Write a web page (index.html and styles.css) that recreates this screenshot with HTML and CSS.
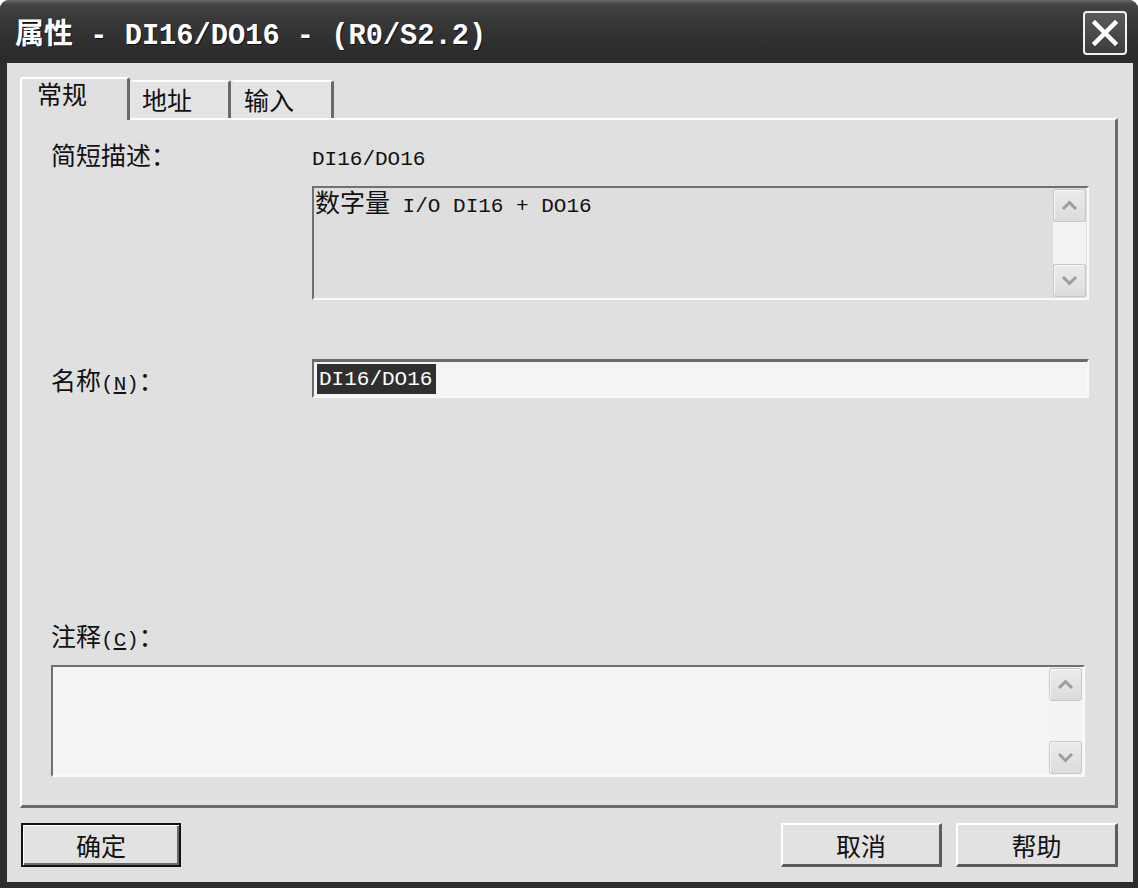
FILE: index.html
```html
<!DOCTYPE html>
<html lang="zh-CN">
<head>
<meta charset="utf-8">
<title>属性 - DI16/DO16 - (R0/S2.2)</title>
<link rel="stylesheet" href="styles.css">
</head>
<body>
<div class="window">
  <div class="titlebar">
    <div class="title">属性<span class="title-lat"> - DI16/DO16 - (R0/S2.2)</span></div>
    <div class="close" aria-label="关闭">
      <svg width="30" height="30" viewBox="0 0 30 30"><path d="M5 5 L25 25 M25 5 L5 25" stroke="#fff" stroke-width="4.5" stroke-linecap="square" fill="none"/></svg>
    </div>
  </div>
  <div class="client">
    <div class="tabs">
      <div class="tab tab-active tab-1">常规</div>
      <div class="tab tab-2">地址</div>
      <div class="tab tab-3">输入</div>
    </div>
    <div class="panel">
      <div class="row row-desc">
        <div class="label">简短描述：</div>
        <div class="value"><span class="lat">DI16/DO16</span></div>
      </div>
      <div class="row row-box">
        <div class="label"></div>
        <div class="box box-readonly">
          <div class="box-text">数字量<span class="lat"> I/O DI16 + DO16</span></div>
          <div class="vscroll">
            <div class="sbtn"><svg width="17" height="11" viewBox="0 0 17 11"><path d="M2 9 L8.5 2.5 L15 9" stroke="#9c9c9c" stroke-width="3" fill="none"/></svg></div>
            <div class="strack"></div>
            <div class="sbtn"><svg width="17" height="11" viewBox="0 0 17 11"><path d="M2 2 L8.5 8.5 L15 2" stroke="#9c9c9c" stroke-width="3" fill="none"/></svg></div>
          </div>
        </div>
      </div>
      <div class="row row-name">
        <div class="label">名称<span class="lat">(<u>N</u>)</span>：</div>
        <div class="field"><span class="sel lat">DI16/DO16</span></div>
      </div>
      <div class="spacer"></div>
      <div class="label label-comment">注释<span class="lat">(<u>C</u>)</span>：</div>
      <div class="box box-comment">
        <div class="box-text"></div>
        <div class="vscroll">
          <div class="sbtn"><svg width="17" height="11" viewBox="0 0 17 11"><path d="M2 9 L8.5 2.5 L15 9" stroke="#9c9c9c" stroke-width="3" fill="none"/></svg></div>
          <div class="strack"></div>
          <div class="sbtn"><svg width="17" height="11" viewBox="0 0 17 11"><path d="M2 2 L8.5 8.5 L15 2" stroke="#9c9c9c" stroke-width="3" fill="none"/></svg></div>
        </div>
      </div>
    </div>
    <div class="buttons">
      <div class="btn btn-default">确定</div>
      <div class="grow"></div>
      <div class="btn">取消</div>
      <div class="btn btn-help">帮助</div>
    </div>
  </div>
</div>
</body>
</html>
```

FILE: styles.css
```css
html, body {
  margin: 0;
  padding: 0;
  background: #ffffff;
}

body {
  font-family: "Noto Sans CJK SC", "Liberation Sans", sans-serif;
  font-size: 25px;
  color: #111;
}

.window {
  width: 1138px;
  height: 888px;
  background: #2d2d2d;
  border-radius: 9px 9px 0 0;
  display: flex;
  flex-direction: column;
  overflow: hidden;
}

.titlebar {
  height: 63px;
  flex: none;
  display: flex;
  align-items: center;
  justify-content: space-between;
  padding: 0 11px 0 15px;
  background: linear-gradient(#6a6a6a 0, #454545 4px, #383838 30%, #2f2f2f 70%, #2a2a2a 100%);
}

.title {
  color: #fff;
  font-weight: bold;
  font-size: 29px;
  line-height: 32px;
  margin-top: 5px;
  white-space: pre;
  text-shadow: 1px 1px 0 #111;
}

.title-lat {
  font-family: "Liberation Mono", monospace;
  font-size: 28.7px;
}

.close {
  width: 44px;
  height: 44px;
  box-sizing: border-box;
  margin-top: 3px;
  border: 2px solid #f2f2f2;
  border-radius: 4px;
  background: linear-gradient(#5a5a5a, #3c3c3c);
  display: flex;
  align-items: center;
  justify-content: center;
}

.client {
  flex: 1;
  background: #e0e0e0;
  margin: 0 5px 6px 7px;
  padding: 14px 15px 15px 13px;
  display: flex;
  flex-direction: column;
  min-height: 0;
}

.lat {
  font-family: "Liberation Mono", monospace;
  font-size: 21px;
  line-height: 14px;
}

/* tabs */
.tabs {
  display: flex;
  align-items: flex-end;
  height: 43px;
  margin-bottom: -2px;
  flex: none;
}

.tab {
  box-sizing: border-box;
  height: 40px;
  background: #e4e4e4;
  border-top: 2px solid #fff;
  border-left: 2px solid #fff;
  border-right: 3px solid #6a6a6a;
  border-radius: 3px 3px 0 0;
  line-height: 26px;
  padding-top: 4px;
  white-space: nowrap;
}

.tab-active {
  height: 43px;
  position: relative;
  z-index: 1;
  background: #e0e0e0;
  padding-top: 1px;
}

.tab-1 { width: 110px; padding-left: 15px; }
.tab-2 { width: 101px; padding-left: 10px; border-left-color: #e4e4e4; }
.tab-3 { width: 103px; padding-left: 11px; border-left-color: #e4e4e4; }

/* panel */
.panel {
  flex: 1;
  box-sizing: border-box;
  border-top: 2px solid #fff;
  border-left: 2px solid #fff;
  border-right: 3px solid #6b6b6b;
  border-bottom: 3px solid #6b6b6b;
  padding: 21px 26px 28px 29px;
  display: flex;
  flex-direction: column;
  min-height: 0;
}

.row {
  display: flex;
  flex: none;
}

.label {
  width: 261px;
  flex: none;
  line-height: 26px;
  white-space: nowrap;
}

.value {
  line-height: 26px;
}

.row-box {
  margin-top: 19px;
}

.box {
  flex: 1;
  box-sizing: border-box;
  display: flex;
  border-top: 2px solid #707070;
  border-left: 2px solid #707070;
  border-right: 2px solid #fafafa;
  border-bottom: 2px solid #fafafa;
}

.box-readonly {
  height: 114px;
  background: #dedede;
}

.box-text {
  flex: 1;
  line-height: 26px;
  padding: 0 0 0 1px;
  white-space: pre;
}

.vscroll {
  width: 33px;
  flex: none;
  display: flex;
  flex-direction: column;
  margin: 1px 1px 1px 0;
}

.sbtn {
  height: 33px;
  box-sizing: border-box;
  flex: none;
  border: 1px solid #c6c6c6;
  border-radius: 3px;
  background: linear-gradient(#ebebeb, #dcdcdc);
  box-shadow: inset 1px 1px 0 #f8f8f8;
  display: flex;
  align-items: center;
  justify-content: center;
}

.strack {
  flex: 1;
  background: #f3f3f3;
}

.row-name {
  margin-top: 59px;
  align-items: center;
}

.field {
  flex: 1;
  height: 39px;
  box-sizing: border-box;
  background: #f4f4f4;
  border-top: 3px solid #6a6a6a;
  border-left: 2px solid #6a6a6a;
  border-right: 2px solid #fafafa;
  border-bottom: 2px solid #fafafa;
  display: flex;
  align-items: center;
  padding-left: 3px;
}

.sel {
  background: #2f2f2f;
  color: #fff;
  height: 30px;
  line-height: 32px;
  padding: 0 4px 0 2px;
}

.spacer {
  flex: 1;
}

.label-comment {
  flex: none;
}

.box-comment {
  flex: none;
  height: 112px;
  margin-top: 17px;
  margin-right: 4px;
  background: #f4f4f4;
}

/* buttons */
.buttons {
  display: flex;
  flex: none;
  margin-top: 15px;
  height: 44px;
}

.grow {
  flex: 1;
}

.btn {
  box-sizing: border-box;
  width: 161px;
  height: 44px;
  background: #e2e2e2;
  border-top: 2px solid #fff;
  border-left: 2px solid #fff;
  border-right: 3px solid #5c5c5c;
  border-bottom: 3px solid #5c5c5c;
  display: flex;
  align-items: center;
  justify-content: center;
  line-height: 26px;
}

.btn-default {
  width: 160px;
  margin-left: 1px;
  border: 2px solid #111;
  box-shadow: inset 1px 1px 0 #fff, inset -2px -2px 0 #6a6a6a;
}

.btn-help {
  margin-left: 14px;
  width: 162px;
}
```
